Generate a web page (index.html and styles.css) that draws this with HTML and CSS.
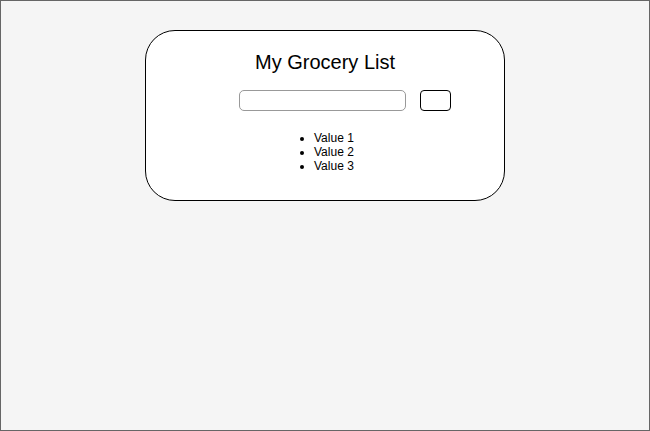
FILE: index.html
```html
<!DOCTYPE html>
<html>
<head>
<meta charset="utf-8">
<link rel="stylesheet" href="styles.css">
</head>
<body>
<div class="frame">
  <div class="card">
    <h1 class="title">My Grocery List</h1>
    <div class="form-row">
      <input class="field" type="text">
      <button class="btn"></button>
    </div>
    <ul class="items">
      <li>Value 1</li>
      <li>Value 2</li>
      <li>Value 3</li>
    </ul>
  </div>
</div>
</body>
</html>
```
FILE: styles.css
```css
html, body {
  margin: 0;
  padding: 0;
}
body {
  font-family: "Liberation Sans", Arial, sans-serif;
  color: #000;
}
.frame {
  width: 650px;
  height: 431px;
  box-sizing: border-box;
  border: 1px solid #666;
  background: #f5f5f5;
  padding: 29px 0 0 144px;
}
.card {
  width: 360px;
  height: 171px;
  box-sizing: border-box;
  border: 1px solid #000;
  border-radius: 30px;
  background: #fff;
  padding-top: 20px;
}
.title {
  margin: 0;
  font-size: 20px;
  font-weight: normal;
  line-height: 23px;
  text-align: center;
}
.form-row {
  display: flex;
  align-items: flex-start;
  margin-top: 16px;
  padding-left: 93px;
  gap: 14px;
}
.field {
  width: 167px;
  height: 21px;
  box-sizing: border-box;
  margin: 0;
  border: 1px solid #999;
  border-radius: 5px;
  background: #fff;
  padding: 0;
}
.btn {
  width: 31px;
  height: 21px;
  box-sizing: border-box;
  margin: 0;
  padding: 0;
  border: 1px solid #000;
  border-radius: 4px;
  background: #fff;
}
.items {
  margin: 20px 0 0 0;
  padding-left: 168px;
  font-size: 12px;
  line-height: 14px;
}
```
